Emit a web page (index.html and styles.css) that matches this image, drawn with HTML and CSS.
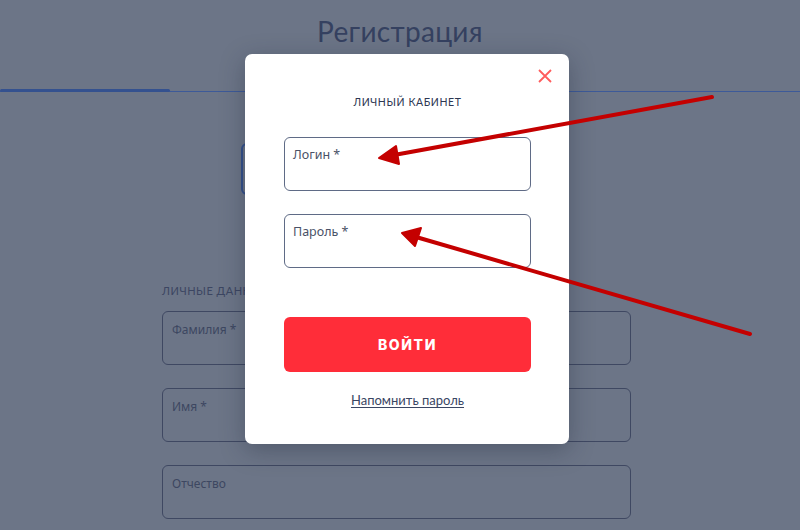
FILE: index.html
```html
<!DOCTYPE html>
<html lang="ru">
<head>
<meta charset="utf-8">
<title>Регистрация</title>
<link rel="stylesheet" href="styles.css">
</head>
<body>
<div class="page">
  <h1 class="title">Регистрация</h1>
  <div class="tabs"><div class="tab-active"></div></div>
  <div class="content">
    <div class="type-row"><div class="type-btn"></div></div>
    <div class="section-label">ЛИЧНЫЕ ДАННЫЕ</div>
    <div class="bg-field">Фамилия *</div>
    <div class="bg-field">Имя *</div>
    <div class="bg-field">Отчество</div>
  </div>
</div>

<div class="modal">
  <button class="close" aria-label="Закрыть">
    <svg width="14" height="14" viewBox="0 0 14 14"><path d="M1 1L13 13M13 1L1 13" stroke="#ff5c5c" stroke-width="1.8" fill="none"/></svg>
  </button>
  <div class="modal-title">ЛИЧНЫЙ КАБИНЕТ</div>
  <div class="field">Логин *</div>
  <div class="field">Пароль *</div>
  <button class="submit">ВОЙТИ</button>
  <a class="remind" href="#">Напомнить пароль</a>
</div>

<svg class="arrows" width="800" height="530" viewBox="0 0 800 530">
  <g stroke="#c40000" stroke-width="4" stroke-linecap="round" fill="#c40000">
    <line x1="712" y1="97" x2="394" y2="155"/>
    <polygon points="379,158 396,146 399,164" stroke-width="2" stroke-linejoin="round"/>
    <line x1="750" y1="334" x2="416" y2="237"/>
    <polygon points="402,233 421,228 415,246" stroke-width="2" stroke-linejoin="round"/>
  </g>
</svg>
</body>
</html>
```

FILE: styles.css
```css
* { box-sizing: border-box; }
html, body { margin: 0; padding: 0; }
body {
  width: 800px;
  height: 530px;
  overflow: hidden;
  background: #6c7587;
  font-family: "Noto Sans", "Open Sans", sans-serif;
  position: relative;
}
.page { width: 800px; }
.title {
  margin: 0;
  padding-top: 14px;
  height: 60px;
  text-align: center;
  font-family: "Lato", sans-serif;
  font-weight: 400;
  font-size: 28px;
  letter-spacing: 0.3px;
  color: #354160;
}
.tabs {
  margin-top: 29px;
  height: 3px;
  border-bottom: 1px solid #3d5a99;
  position: relative;
}
.tab-active {
  width: 170px;
  height: 3px;
  background: #34518f;
  border-radius: 2px;
}
.content {
  margin-left: 162px;
  width: 469px;
}
.type-row {
  margin-top: 51px;
  height: 52px;
}
.type-btn {
  margin-left: 79px;
  width: 200px;
  height: 52px;
  border: 2px solid #33508c;
  border-radius: 6px;
}
.section-label {
  margin-top: 89px;
  font-family: "Lato", sans-serif;
  font-size: 11px;
  letter-spacing: 0.5px;
  color: #3c4662;
}
.bg-field {
  margin-top: 14px;
  height: 54px;
  border: 1px solid #3f4862;
  border-radius: 6px;
  padding: 9px 9px;
  font-size: 12px;
  color: #3d4761;
}
.bg-field + .bg-field { margin-top: 23px; }

.modal {
  position: absolute;
  left: 245px;
  top: 54px;
  width: 324px;
  height: 390px;
  background: #fff;
  border-radius: 7px;
  box-shadow: 0 6px 24px rgba(30, 36, 55, 0.35);
  padding: 42px 38px 0 39px;
  display: flex;
  flex-direction: column;
  align-items: stretch;
}
.close {
  position: absolute;
  top: 14px;
  right: 16px;
  width: 16px;
  height: 16px;
  padding: 0;
  border: none;
  background: none;
  display: flex;
  align-items: center;
  justify-content: center;
}
.modal-title {
  text-align: center;
  font-family: "Lato", sans-serif;
  font-size: 10.5px;
  letter-spacing: 0.6px;
  color: #2d3752;
  line-height: 12px;
  margin-bottom: 29px;
}
.field {
  height: 54px;
  border: 1px solid #5f6b86;
  border-radius: 6px;
  padding: 9px 8px;
  font-size: 12.5px;
  color: #4a5267;
  line-height: 16px;
}
.field + .field { margin-top: 23px; }
.submit {
  margin-top: 49px;
  height: 55px;
  border: none;
  border-radius: 6px;
  background: #ff2d39;
  color: #fff;
  font-family: "Inter", sans-serif;
  font-weight: 800;
  font-size: 14px;
  letter-spacing: 1.6px;
}
.remind {
  margin-top: 20px;
  align-self: center;
  font-family: "Lato", sans-serif;
  font-size: 13px;
  color: #3a4663;
  text-decoration: underline;
  text-underline-offset: 2px;
}
.arrows {
  position: absolute;
  left: 0;
  top: 0;
  pointer-events: none;
}
```
